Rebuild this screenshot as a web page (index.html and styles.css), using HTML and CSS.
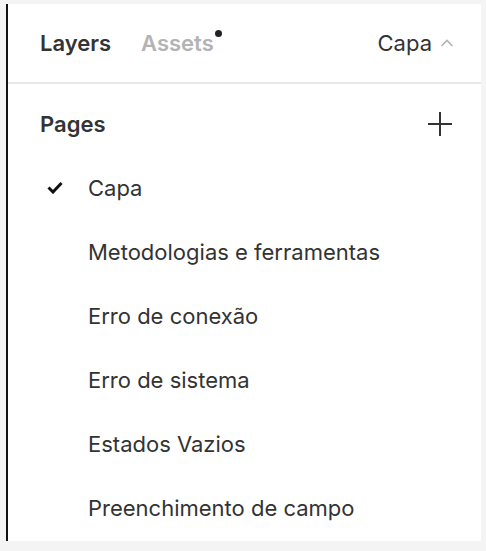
FILE: index.html
```html
<!DOCTYPE html>
<html lang="en">
<head>
  <meta charset="UTF-8">
  <title>Layers</title>
  <link rel="stylesheet" href="styles.css">
</head>
<body>
  <div class="panel">
    <div class="header">
      <div class="tabs">
        <span class="tab active">Layers</span>
        <span class="tab muted">Assets<span class="dot"></span></span>
      </div>
      <div class="page-pick">
        <span>Capa</span>
        <svg width="14" height="10" viewBox="0 0 14 10"><path d="M1.5 8 L7 2.5 L12.5 8" fill="none" stroke="#b3b3b3" stroke-width="1.6"/></svg>
      </div>
    </div>
    <div class="pages">
      <div class="pages-head">
        <span class="pages-title">Pages</span>
        <svg width="24" height="24" viewBox="0 0 24 24"><path d="M12 0 V24 M0 12 H24" stroke="#333" stroke-width="2"/></svg>
      </div>
      <ul class="page-list">
        <li class="selected">
          <svg class="check" width="16" height="13" viewBox="0 0 16 13"><path d="M1.5 6.5 L6 11 L14.5 2" fill="none" stroke="#111" stroke-width="3"/></svg>
          Capa
        </li>
        <li>Metodologias e ferramentas</li>
        <li>Erro de conexão</li>
        <li>Erro de sistema</li>
        <li>Estados Vazios</li>
        <li>Preenchimento de campo</li>
      </ul>
    </div>
  </div>
</body>
</html>
```

FILE: styles.css
```css
body {
  margin: 0;
  background-color: #f4f4f4;
  font-family: Inter, "Noto Sans", sans-serif;
  color: #333;
}
.panel {
  background-color: #fff;
  margin: 4px 5px 0 6px;
  height: 537px;
  border-left: 2px solid #111;
}
.header {
  height: 78px;
  border-bottom: 2px solid #e8e8e8;
  display: flex;
  align-items: center;
  justify-content: space-between;
  padding: 0 27px 0 32px;
}
.tabs {
  display: flex;
  gap: 30px;
  font-size: 22px;
  font-weight: 600;
}
.tab.active {
  color: #333;
}
.tab.muted {
  color: #b3b3b3;
  position: relative;
}
.dot {
  position: absolute;
  right: -8px;
  top: 0;
  width: 7px;
  height: 7px;
  border-radius: 50%;
  background-color: #222;
}
.page-pick {
  display: flex;
  align-items: center;
  gap: 8px;
  font-size: 22px;
}
.pages {
  padding: 27px 29px 0 32px;
}
.pages-head {
  display: flex;
  align-items: center;
  justify-content: space-between;
  height: 26px;
}
.pages-title {
  font-size: 22px;
  font-weight: 600;
}
.page-list {
  list-style: none;
  margin: 0;
  padding: 0;
  margin-top: 19px;
}
.page-list li {
  height: 64px;
  display: flex;
  align-items: center;
  padding-left: 48px;
  position: relative;
  font-size: 22px;
}
.check {
  position: absolute;
  left: 7px;
  top: 25px;
}
```
